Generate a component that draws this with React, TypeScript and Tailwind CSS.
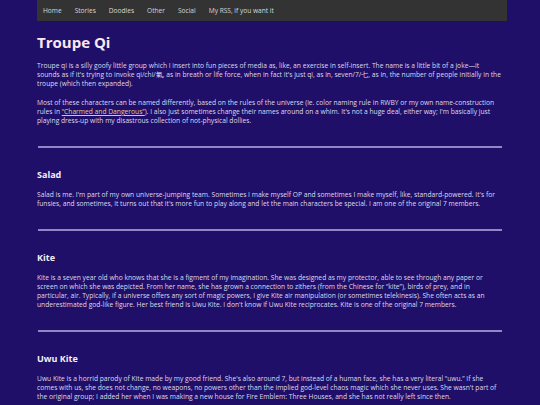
export default function App() {
  const sections = [
    {
      name: "Salad",
      text: "Salad is me. I'm part of my own universe-jumping team. Sometimes I make myself OP and sometimes I make myself, like, standard-powered. It's for funsies, and sometimes, it turns out that it's more fun to play along and let the main characters be special. I am one of the original 7 members.",
    },
    {
      name: "Kite",
      text: "Kite is a seven year old who knows that she is a figment of my imagination. She was designed as my protector, able to see through any paper or screen on which she was depicted. From her name, she has grown a connection to zithers (from the Chinese for \u201ckite\u201d), birds of prey, and in particular, air. Typically, if a universe offers any sort of magic powers, I give Kite air manipulation (or sometimes telekinesis). She often acts as an underestimated god-like figure. Her best friend is Uwu Kite. I don't know if Uwu Kite reciprocates. Kite is one of the original 7 members.",
    },
    {
      name: "Uwu Kite",
      text: "Uwu Kite is a horrid parody of Kite made by my good friend. She's also around 7, but instead of a human face, she has a very literal \u201cuwu.\u201d If she comes with us, she does not change, no weapons, no powers other than the implied god-level chaos magic which she never uses. She wasn't part of the original group; I added her when I was making a new house for Fire Emblem: Three Houses, and she has not really left since then.",
    },
  ];

  return (
    <main
      className="min-h-screen bg-[#1f0f68] text-[#dedaec]"
      style={{ fontFamily: '"Open Sans", "Noto Sans", sans-serif' }}
    >
      <div className="ml-[37px] w-[470px]">
        <nav className="flex h-[21px] items-center gap-[13px] bg-[#333333] pl-[6px] text-[6.6px] text-[#d8d8d8]">
          <span>Home</span>
          <span>Stories</span>
          <span>Doodles</span>
          <span>Other</span>
          <span>Social</span>
          <span>My RSS, if you want it</span>
        </nav>

        <div className="w-[466px] text-[6.7px] leading-[9px]">
          <h1 className="mt-[11px] text-[15px] font-bold leading-[20px] text-[#fbe8ef]">
            Troupe Qi
          </h1>

          <p className="mt-[9px]">
            Troupe qi is a silly goofy little group which I insert into fun pieces of media as, like, an exercise in self-insert. The name is a little bit of a joke—it sounds as if it's trying to invoke qi/chi/氣, as in breath or life force, when in fact it's just qi, as in, seven/7/七, as in, the number of people initially in the troupe (which then expanded).
          </p>

          <p className="mt-[10px]">
            Most of these characters can be named differently, based on the rules of the universe (ie. color naming rule in RWBY or my own name-construction rules in{" "}
            <a className="text-[#e6c98a] underline">{"\u201cCharmed and Dangerous\u201d"}</a>). I also just sometimes change their names around on a whim. It's not a huge deal, either way; I'm basically just playing dress-up with my disastrous collection of not-physical dollies.
          </p>

          {sections.map((s) => (
            <section key={s.name}>
              <hr className="ml-px mt-[21px] h-[2px] w-[464px] border-0 bg-[#9088c6]" />
              <h2 className="mt-[21px] text-[9px] font-bold leading-[12px] text-[#f4eef6]">
                {s.name}
              </h2>
              <p className="mt-[9px]">{s.text}</p>
            </section>
          ))}
        </div>
      </div>
    </main>
  );
}
